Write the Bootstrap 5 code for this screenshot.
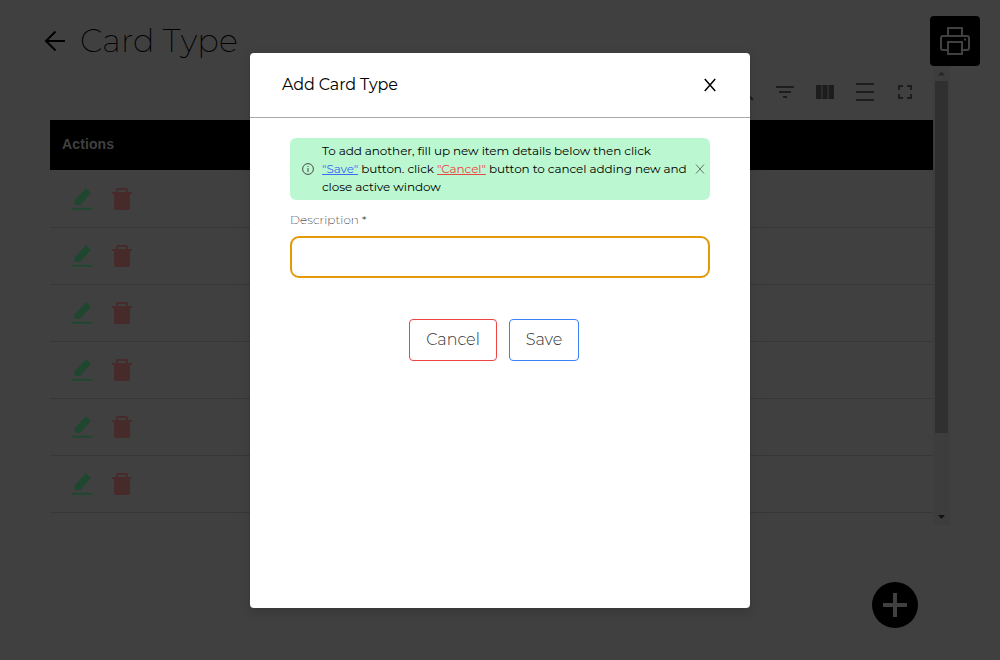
<!DOCTYPE html>
<html lang="en">
<head>
<meta charset="utf-8">
<meta name="viewport" content="width=device-width, initial-scale=1">
<title>Card Type</title>
<link href="https://cdn.jsdelivr.net/npm/bootstrap@5.3.0/dist/css/bootstrap.min.css" rel="stylesheet">
<style>
body{font-family:Montserrat,Inter,"Open Sans",sans-serif;background:#404040;color:#000;width:1000px;height:660px}
svg{display:block;flex:none}
.screen{height:660px;padding:16px 20px 0 44px}
.topbar{height:50px}
.page-title{font-size:32px;font-weight:200;line-height:50px;letter-spacing:.1px;margin:0 0 0 14px;white-space:nowrap}
.print-btn{width:50px;height:50px;background:#000;border-radius:4px}
.scroll-pane{width:900px;height:459px;margin-left:6px}
.tools{height:54px;padding:14px 16px 0 0;gap:16px;color:#1d1d1d}
.thead-bar{height:50px;background:#000;color:#404040;font:700 14px "Liberation Sans",Arial,sans-serif;padding:0 0 2px 12px;letter-spacing:.12px}
.item-row{height:57px;border-bottom:1px solid #373737;padding-left:20px;gap:16px}
.item-row:first-child{height:58px;padding-top:1px}
.sbar{width:17px;background:#3d3d3d;padding:5px 2px 6px}
.thumb{width:13px;height:352px;background:#303030;margin-top:2px}
.fab{right:82px;bottom:32px;width:46px;height:46px;background:#000}
.dialog-box{left:250px;top:53px;width:500px;height:555px;border-radius:4px;box-shadow:0 4px 12px rgba(0,0,0,.15)}
.dialog-head{height:65px;border-bottom:1px solid #a9a9a9;padding:0 34px 0 32px;font-size:16px}
.t-head{letter-spacing:-.13px}
.dialog-body{padding:20px 40px 0}
.note{height:62px;background:#bbf7d0;border-radius:6px;padding:0 5px 0 12px;font-size:12px;line-height:18px}
.note-text{margin-left:8px;width:370px;white-space:nowrap;letter-spacing:-.08px}
.note-text div{width:max-content}
.save-word{color:#3b6cf6}.cancel-word{color:#ef4444}
.field-label{font-size:12px;font-weight:200;line-height:18px;margin:11px 0 7px;display:block;width:max-content;letter-spacing:.08px}
.field-input{height:42px;border:2px solid #e29a09!important;border-radius:9px;box-shadow:none!important}
.action{height:42px;border-radius:4px;font-size:16px;font-weight:300;padding:0;color:#333;line-height:38px}
.act-cancel{width:88px;border:1px solid #ef4444}.act-save{width:70px;border:1px solid #3b82f6}
</style>
</head>
<body class="overflow-hidden position-relative">
<main class="screen">
  <header class="topbar d-flex align-items-center">
    <svg width="22" height="24" viewBox="0 0 22 24" fill="none" stroke="#000" stroke-width="2"><path d="M21 12H2M11.500 2.500 2 12l9.500 9.500"/></svg>
    <h1 class="page-title">Card Type</h1>
    <div class="print-btn ms-auto d-flex align-items-center justify-content-center">
      <svg width="32" height="32" viewBox="0 0 32 32" fill="none" stroke="#404040" stroke-width="2"><path d="M9 10V3h14v7M9 25H4q-2 0-2-2V13q0-2 2-2h24q2 0 2 2v10q0 2-2 2h-5M9 17h14v12H9z"/><path d="M25 14.500h2" /></svg>
    </div>
  </header>
  <section class="scroll-pane d-flex">
    <div class="flex-grow-1">
      <div class="tools d-flex justify-content-end">
        <svg width="24" height="24" viewBox="0 0 24 24" fill="none" stroke="currentColor" stroke-width="2"><circle cx="9.500" cy="9.500" r="5.500"/><path d="m14 14 5.800 5.800"/></svg>
        <svg width="24" height="24" viewBox="0 0 24 24" fill="currentColor"><path d="M3 6h18v2H3zM6 11h12v2H6zM10 16h4v2h-4z"/></svg>
        <svg width="24" height="24" viewBox="0 0 24 24" fill="currentColor"><path d="M3 5h5v14H3zM9.500 5h5v14h-5zM16 5h5v14h-5z"/><path d="M8 5h1.500v14H8zM14.500 5h1.500v14h-1.500z" opacity=".5"/></svg>
        <svg width="24" height="24" viewBox="0 0 24 24" fill="currentColor"><path d="M3 3h18v2H3zM3 11h18v2H3zM3 19h18v2H3z"/></svg>
        <svg width="24" height="24" viewBox="0 0 24 24" fill="currentColor"><path d="M5 5h5v2H7v3H5zM14 5h5v5h-2V7h-3zM5 14h2v3h3v2H5zM17 14h2v5h-5v-2h3z"/></svg>
      </div>
      <div class="thead-bar d-flex align-items-center"><span>Actions</span></div>
      <div id="rows"></div>
    </div>
    <div class="sbar">
      <svg width="13" height="8" viewBox="0 0 13 8"><path d="M3 4.500 6.500 .5 10 4.500z" fill="#262626"/></svg>
      <div class="thumb"></div>
      <svg width="13" height="86" viewBox="0 0 13 86"><path d="M3 82h7l-3.500 4z" fill="#111"/></svg>
    </div>
  </section>
</main>
<div class="fab position-absolute rounded-circle d-flex align-items-center justify-content-center">
  <svg width="24" height="24" viewBox="0 0 24 24"><path d="M10 0h4v10h10v4H14v10h-4V14H0v-4h10z" fill="#404040"/></svg>
</div>
<div class="dialog-box position-absolute bg-white" role="dialog">
  <div class="dialog-head d-flex align-items-center justify-content-between">
    <span class="t-head">Add Card Type</span>
    <svg width="12" height="14" viewBox="0 0 12 14" fill="none" stroke="#000" stroke-width="1.500"><path d="M.8 1l10.400 12M11.200 1 .8 13"/></svg>
  </div>
  <div class="dialog-body">
    <div class="note d-flex align-items-center">
      <svg width="12" height="12" viewBox="0 0 12 12" fill="none" stroke="#444b48"><circle cx="6" cy="6" r="5.400"/><path d="M6 5v4M6 3v1"/></svg>
      <div class="note-text">
        <div class="l1">To add another, fill up new item details below then click</div>
        <div class="l2"><u class="save-word">"Save"</u> button. click <u class="cancel-word">"Cancel"</u> button to cancel adding new and</div>
        <div class="l3">close active window</div>
      </div>
      <svg class="ms-auto" width="10" height="10" viewBox="0 0 10 10" fill="none" stroke="#66756d"><path d="m1 .5 8 9M9 .5l-8 9"/></svg>
    </div>
    <label class="field-label" for="desc">Description *</label>
    <input id="desc" class="field-input form-control" type="text">
    <div class="d-flex justify-content-center" style="margin:41px 12px 0 0;gap:12px">
      <button class="action act-cancel btn"><span>Cancel</span></button>
      <button class="action act-save btn"><span>Save</span></button>
    </div>
  </div>
</div>
<script>
const row = `<div class="item-row d-flex align-items-center">
<svg width="24" height="24" viewBox="0 0 24 24" fill="#1f4730"><path d="M4.500 18v-4.500L16 1l5 5L10 18zM1.500 20.700h21v2h-21z"/></svg>
<svg width="24" height="24" viewBox="0 0 24 24" fill="#472a2a"><path d="M6 5V3q0-2 2-2h8q2 0 2 2v2h4v2h-2v14q0 2-2 2H6q-2 0-2-2V7H2V5zM8 5h8V3H8z" fill-rule="evenodd"/></svg></div>`;
document.getElementById('rows').innerHTML = row.repeat(6);
</script>
<script src="https://cdn.jsdelivr.net/npm/bootstrap@5.3.0/dist/js/bootstrap.bundle.min.js"></script>
</body>
</html>
